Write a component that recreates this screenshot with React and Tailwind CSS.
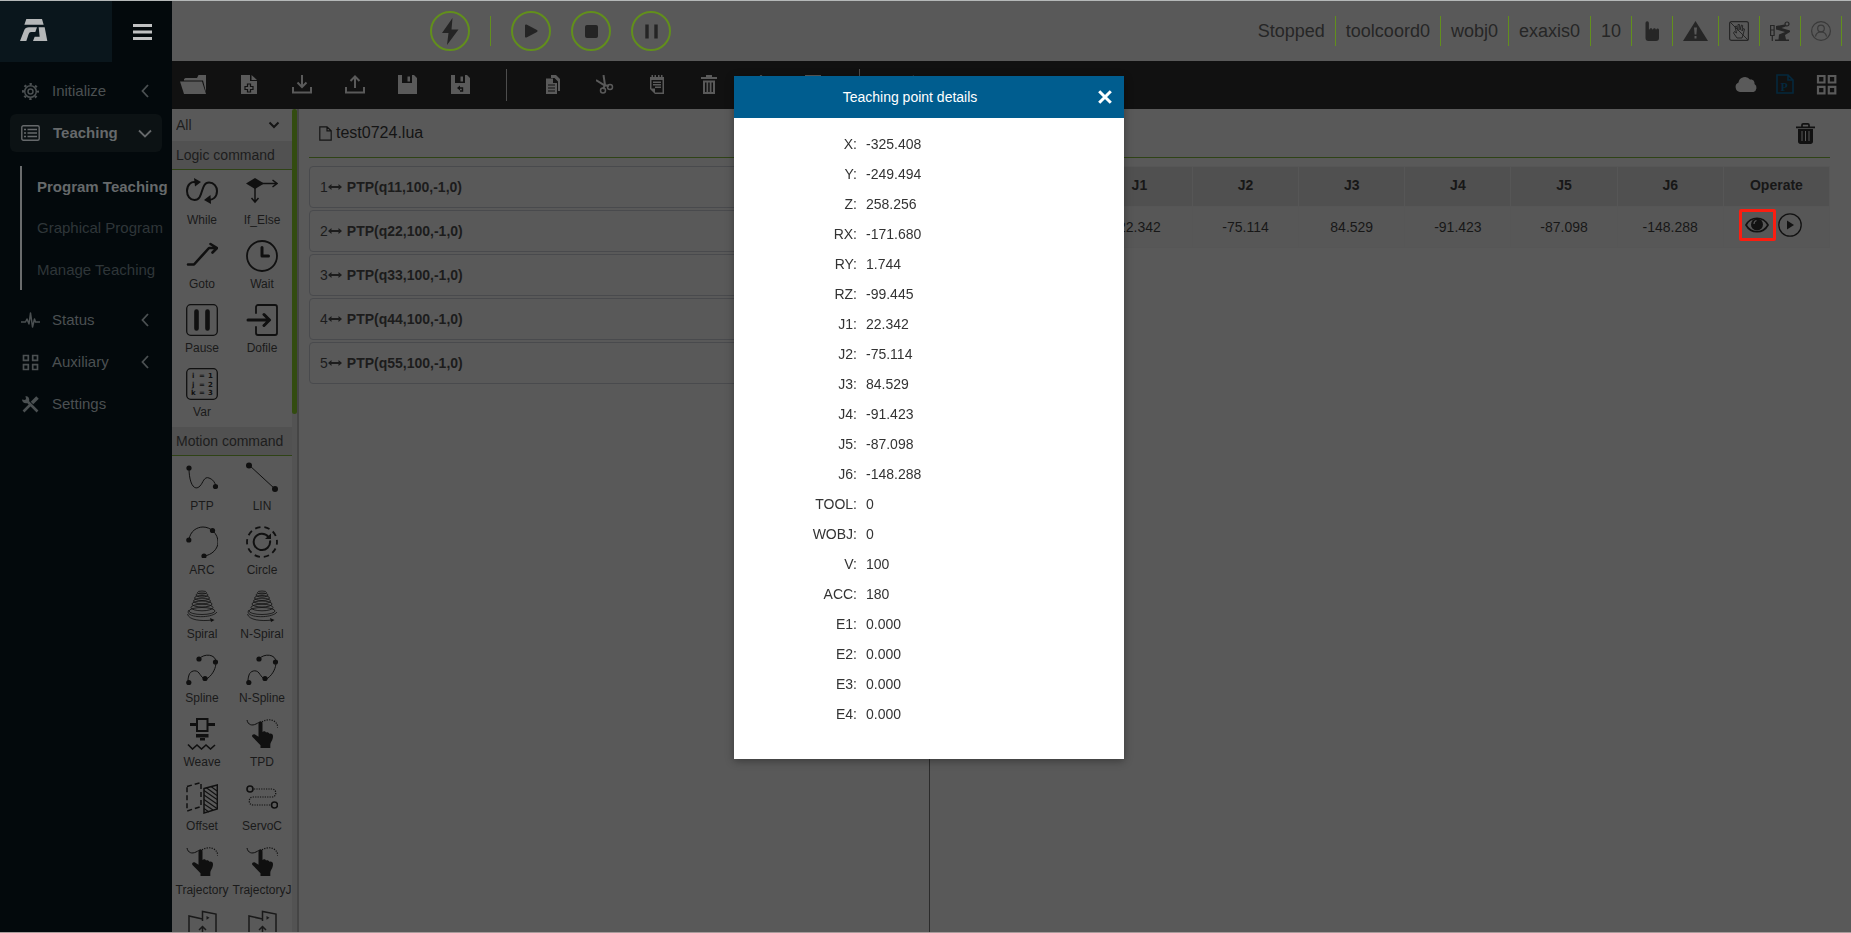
import React from "react";

const S = ({ w = 32, h, box, className = "", children }) => (
  <svg width={w} height={h || w} viewBox={box || `0 0 ${w} ${h || w}`} className={`shrink-0 ${className}`} fill="none" stroke="currentColor" strokeWidth="2" aria-hidden="true">
    {children}
  </svg>
);

const fill = { fill: "currentColor", stroke: "none" };
const round = { strokeLinecap: "round", strokeLinejoin: "round" };

/* ---------- command palette drawings (32 x 32) ---------- */
const HandTrack = () => (
  <S>
    <path d="M1 2c1 5 5 6 9 4 2-1 3-2 5-2" strokeWidth="1" />
    <path d="M16 4c6-4 15-3 16 6" strokeWidth="1.2" strokeDasharray="1.2 1.3" />
    <path {...fill} d="M12.500 5.500a2 2 0 0 1 4 0V14c1-1.200 3-1 3.500.6 1.300-.8 2.800-.2 3.200 1.100 1.500-.6 3.800.1 3.800 2.300 0 4.500-2.500 5.500-2.700 9V30H14.500v-2.700C12 24.500 9.500 22 6.500 19c-1.300-1.500.5-3.500 2.500-2.600l3.500 2.400z" />
  </S>
);
const Spiral = () => (
  <S>
    <g strokeWidth="0.8">
      <ellipse cx="16" cy="2.500" rx="4.500" ry="1.500" />
      <ellipse cx="16" cy="5" rx="6" ry="2" />
      <ellipse cx="16" cy="8" rx="7.500" ry="2.500" />
      <ellipse cx="16" cy="11" rx="8.500" ry="2.800" />
      <ellipse cx="16" cy="14" rx="10" ry="3" />
      <ellipse cx="16" cy="17.500" rx="11" ry="3.300" />
      <ellipse cx="16" cy="21" rx="13" ry="3.500" />
      <path d="M3 20c-6 8 23 9 28 2" />
      <path d="M1.500 24c1 6 14 7.500 24.500 6" />
    </g>
    <path {...fill} d="m24 28 4.500 2-3.500 2z" />
  </S>
);
const Spline = () => (
  <S>
    <path d="M13 5c5-6 17-5 17 3 0 6-3 12-8 16-4 3-6-1-9-5-3-4-9-2-10 2-1 3-1 5-1 7" strokeWidth="1" />
    <circle {...fill} cx="13" cy="5" r="2.600" />
    <circle {...fill} cx="29.500" cy="8" r="2.600" />
    <circle {...fill} cx="19" cy="24.500" r="2.600" />
    <circle {...fill} cx="2.800" cy="28.500" r="2.600" />
  </S>
);
const Door = () => (
  <S>
    <g strokeWidth="1.500">
      <path d="M15.500 31H3V6l13.500 3M16.500 11V1.500L30 4v27" />
      <path d="M16.500 16v9M13 20l3.500-3.500L20 20" />
    </g>
    <path {...fill} d="m20.500 6 3 1.800-3 2z" />
  </S>
);

const logic = [
  ["While", <S key="i"><path strokeWidth="2" d="M11 6.500C5 4.500 1 9 1 15c0 5 3 9 7.500 9C18 24 14 6.500 23 6.500c5 0 8 4 8 8.500 0 6-4 9.500-9 8.500" /><path {...fill} d="m8 2 7 4-6 4.500zM24.500 19l-6.500 5 7 4z" /></S>],
  ["If_Else", <S key="i"><path {...fill} d="M0 7.500 9 2l9 5.500L9 13z" /><path strokeWidth="1.500" d="M15 7.500h16M26.500 4l4.500 3.500-4.500 3.500M9 12v14M5.500 22 9 26l3.500-4" /></S>],
  ["Goto", <S key="i"><path {...round} strokeWidth="2.600" d="M2 24.500h6L23 8h7M24.500 4 31 8l-4.500 4.500" /></S>],
  ["Wait", <S key="i"><circle cx="16" cy="16" r="15" strokeWidth="1.800" /><path {...round} strokeWidth="3" d="M16 7.500V16h6.500" /></S>],
  ["Pause", <S key="i"><rect x="0.700" y="0.700" width="30.600" height="30.600" rx="4" strokeWidth="1.300" /><path strokeLinecap="round" strokeWidth="4.600" d="M10.500 7.500v17M21.500 7.500v17" /></S>],
  ["Dofile", <S key="i"><path {...round} strokeWidth="1.800" d="M10 9V3c0-1 1-2 2-2h17c1 0 2 1 2 2v26c0 1-1 2-2 2H12c-1 0-2-1-2-2v-6" /><path {...round} strokeWidth="3" d="M2 16h21M18 10.500l5.500 5.500-5.500 5.500" /></S>],
  ["Var", <S key="i"><rect x="0.700" y="0.700" width="30.600" height="30.600" rx="4" strokeWidth="1.300" /><g {...fill} fontSize="7" fontWeight="bold" fontFamily="'DejaVu Sans', sans-serif"><text x="6" y="10">i</text><text x="13" y="10">=</text><text x="22" y="10">1</text><text x="6" y="18.500">j</text><text x="13" y="18.500">=</text><text x="22" y="18.500">2</text><text x="5" y="27">k</text><text x="13" y="27">=</text><text x="22" y="27">3</text></g></S>],
];

const motion = [
  ["PTP", <S key="i"><path strokeWidth="1" d="M3 6c0 15 5 24 11 18 3-3 4-10 9-8 4 1 6 5 7 8" /><circle {...fill} cx="3" cy="6" r="2.600" /><circle {...fill} cx="29.500" cy="24.500" r="2.600" /></S>],
  ["LIN", <S key="i"><path strokeWidth="1" d="m3 3 26 24" /><circle {...fill} cx="3" cy="3.500" r="3" /><circle {...fill} cx="29" cy="27" r="3" /></S>],
  ["ARC", <S key="i"><path strokeWidth="1" d="M3 14C4 5 11 1 17 1c8 0 15 7 15 15 0 7-6 13-14 14" /><circle {...fill} cx="2.800" cy="14" r="2.600" /><circle {...fill} cx="26.500" cy="4.500" r="2.600" /><circle {...fill} cx="18" cy="30" r="2.600" /></S>],
  ["Circle", <S key="i"><circle cx="16" cy="16" r="15" strokeWidth="1.800" strokeDasharray="5.400 4.020" strokeDashoffset="2.700" /><path d="M24 14.500A8.200 8.200 0 1 1 22.500 11" strokeWidth="2" /><path {...fill} d="M25 7.500V13h-6z" /></S>],
  ["Spiral", <Spiral key="i" />],
  ["N-Spiral", <Spiral key="i" />],
  ["Spline", <Spline key="i" />],
  ["N-Spline", <Spline key="i" />],
  ["Weave", <S key="i"><rect x="11" y="1" width="10.500" height="12" strokeWidth="2" /><path d="M4 6.500h7M21.500 6.500H29" strokeWidth="3" /><path {...fill} d="M10 16h12.500v3.500H10zM14 20h5v2.500h-5z" /><path strokeWidth="1.600" d="m2 26.500 4.500 4.500 4.500-4 4.500 4 4.500-4 4.500 4 4.500-4" /></S>],
  ["TPD", <HandTrack key="i" />],
  ["Offset", <S key="i"><path strokeWidth="1.500" strokeDasharray="5 3" d="M1 4.500 15 .5v24L1 29z" /><path strokeWidth="1.500" d="M18 6.500 31.300 3v24L18 31z" /><path strokeWidth="1.100" d="m20 5.500 11 8M18 8.500l13 9M18 13l13 9M18 17.500l13 9M18 22l9 6M18 26.500l5 3.500M25 4.500l6 4.500" /></S>],
  ["ServoC", <S key="i"><circle cx="4" cy="7" r="3" strokeWidth="1.600" /><circle cx="28.500" cy="23" r="3" strokeWidth="1.600" /><path strokeWidth="1.200" strokeDasharray="1.200 1.200" d="M8 7h18c5 0 5 8 0 8H7c-5 0-5 8 0 8h18" /></S>],
  ["Trajectory", <HandTrack key="i" />],
  ["TrajectoryJ", <HandTrack key="i" />],
];

const cellButton = "flex h-16 min-w-0 flex-col items-center pt-1.5 text-xs leading-6 whitespace-nowrap text-[#1a1a1a]";

function Palette({ title, items, children }) {
  return (
    <section>
      <h2 className="box-content h-7 border-b border-[#2f4316] bg-[#515151] pl-1 text-sm leading-7 text-[#1d1d1d]">{title}</h2>
      <div className="grid grid-cols-2 pb-px">
        {items.map(([label, icon]) => (
          <button key={label} type="button" className={cellButton}>
            <span className="text-[#101010]">{icon}</span>
            {label}
          </button>
        ))}
        {children}
      </div>
    </section>
  );
}

/* ---------- toolbar drawings ---------- */
const floppy = <path {...fill} fillRule="evenodd" d="M0 0h16l3 3v16H0zM4 0v8h10V0zM9.500 1.500v5h2.500v-5z" />;
const Floppy = () => <S w={19}>{floppy}</S>;
const FloppyAs = () => (
  <S w={19}>
    {floppy}
    <path stroke="#111" strokeWidth="1.400" d="M8 13h3.500v3H9" />
    <path fill="#111" stroke="none" d="M9 10.500v5L6 13z" />
  </S>
);
const fileTools = [
  ["New", <S key="i" w={16} h={19}><path {...fill} d="M0 0h9v6h7v13H0zM10.500 0 16 5h-5.500z" /><path stroke="#111" strokeWidth="1.200" d="M6.500 9h3v2.500H12v3H9.500V17h-3v-2.500H4v-3h2.500z" /></S>],
  ["Import", <S key="i" w={20} h={19}><path d="M1 12v5.500h18V12" strokeWidth="2" /><path d="M10 0v12M5.500 7.500 10 12l4.500-4.500" strokeWidth="2" /></S>],
  ["Export", <S key="i" w={20} h={19}><path d="M1 12v5.500h18V12" strokeWidth="2" /><path d="M10 13V1.500M5.500 6 10 1.500 14.500 6" strokeWidth="2" /></S>],
  ["Save", <Floppy key="i" />],
  ["Save as", <FloppyAs key="i" />],
];
const editTools = [
  ["Copy", <S key="i" w={14} h={19}><path {...fill} d="M5 0h5l4 4v12h-2V6.500L8.500 3H5z" /><path {...fill} fillRule="evenodd" d="M0 3.500h7V8h4v11H0zm2 6v1h7v-1zm0 3v1h7v-1zm0 3v1h7v-1z" /></S>],
  ["Cut", <S key="i" w={18} h={19}><path strokeWidth="2" d="M7.500 0 9 10l-2 4M0 5l8 5 5 1" /><circle cx="7" cy="15.500" r="2.500" strokeWidth="1.500" /><circle cx="14" cy="12" r="2.500" strokeWidth="1.500" /></S>],
  ["Paste", <S key="i" w={14} h={19}><path {...fill} fillRule="evenodd" d="M0 2h1.500V0H3v2h1.500V0H6v2h2V0h1.500v2H11V0h1.500v2H14v17H5l-5-5zM1.500 5v8.500H5V17.500h7.500V5zM3 6.500h8V8H3zM3 9h8v1.500H3zM5 11.500h6V13H5z" /></S>],
  ["Delete", <S key="i" w={16} h={19}><path {...fill} fillRule="evenodd" d="M5 0h6v2h5v2H0V2h5zM2 5.500h12V19H2zm2 2V17h1.500V7.500zm3.200 0V17h1.500V7.500zm3.300 0V17H12V7.500z" /></S>],
  ["Move up", <S key="i" w={16} h={19}><path d="M8 19V1M2 7l6-6 6 6" /></S>],
  ["Edit", <S key="i" w={16} h={19}><path d="M0 1h16v17H0z" /></S>],
];

const divider = "h-8 w-px shrink-0 bg-[#4d4d4d]";

function Toolbar() {
  return (
    <div className="flex h-12 shrink-0 items-center bg-[#111111] text-[#5a5a5a]">
      <button type="button" aria-label="Open" className="flex w-[50px] shrink-0 pb-0.5 pl-2">
        <S w={27} h={19}><path {...fill} d="M4 4 5.500 3H17l1.500-3H26v17l-3-11.500H4z" /><path {...fill} d="M0 6.500h22L26 19H4z" /></S>
      </button>
      {fileTools.map(([n, i]) => <button key={n} type="button" aria-label={n} className="flex w-[53px] shrink-0 justify-center pb-0.5">{i}</button>)}
      <span className={`${divider} ml-[19px] mr-5`} />
      {editTools.map(([n, i]) => <button key={n} type="button" aria-label={n} className="flex w-[52px] shrink-0 justify-center pb-0.5">{i}</button>)}
      <span className={`${divider} ml-5 mr-7`} />
      <button type="button" aria-label="Undo" className="flex w-[52px] shrink-0 justify-center pb-0.5"><S w={16} h={19}><path d="M8 1 3 6l5 5M3 6h11v10H3" /></S></button>
      <div className="ml-auto flex items-center gap-[18px] pr-[14px] pb-0.5">
        <button type="button" aria-label="Cloud"><S w={23} h={16}><path {...fill} d="M5 16a5 5 0 0 1-1.500-9.500A6.500 6.500 0 0 1 15 3.500c3-.7 5 2 4.500 4.500A4.500 4.500 0 0 1 18.500 16z" /></S></button>
        <button type="button" aria-label="Program" className="text-[#05283d]"><S w={18} h={20}><path strokeWidth="1.600" d="M1 1h11l5 5v13H1zM12 1v5h5" /><text {...fill} x="4.500" y="16.500" fontSize="12" fontWeight="bold" fontFamily="'Liberation Serif', serif">P</text></S></button>
        <button type="button" aria-label="Layout" className="pl-1"><S w={21}><path strokeWidth="2.200" d="M2 2h6.500v6.500H2zM12.800 2h6.500v6.500h-6.500zM2 12.800h6.500v6.500H2zM12.800 12.800h6.500v6.500h-6.500z" /></S></button>
      </div>
    </div>
  );
}

/* ---------- header ---------- */
const ring = "flex size-10 items-center justify-center rounded-full border-2 border-[#628f1c] text-[#242424]";
const slot = "flex h-[30px] items-center border-r border-[#628f1c] px-2.5";

function Header() {
  return (
    <header className="flex h-[60px] shrink-0 items-center bg-[#595959] pr-[9px] pl-[258px] text-lg text-[#262626]">
      <button type="button" aria-label="Enable" className={ring}><S w={17} h={27}><path {...fill} d="M10.500 0 0 15h6.500L5 27l11.500-15.500H9.500z" /></S></button>
      <span className="mx-5 h-[30px] w-px bg-[#628f1c]" />
      <div className="flex gap-5">
        <button type="button" aria-label="Start" className={ring}><S w={14}><path fill="currentColor" {...round} d="M2 1.500 12.500 7 2 12.500z" /></S></button>
        <button type="button" aria-label="Stop" className={ring}><span className="size-[13px] rounded-xs bg-[#242424]" /></button>
        <button type="button" aria-label="Pause" className={ring}><S w={13} h={15}><path strokeWidth="3.400" d="M2 .5v14M11 .5v14" /></S></button>
      </div>
      <div className="ml-auto flex">
        {["Stopped", "toolcoord0", "wobj0", "exaxis0", "10"].map((t) => <span key={t} className={slot}>{t}</span>)}
        <span className={slot}><S w={20}><path {...fill} d="M3.500 2a1.700 1.700 0 0 1 3.400 0v6.500h.6c.3-1.600 2.700-1.600 2.900 0h.6c.3-1.600 2.600-1.600 2.800 0h.5c.3-1.500 2.700-1.300 2.700.5V17c0 2-1 3-3 3H6.500c-2 0-3-1-3-3z" /></S></span>
        <span className={slot}><S w={25} h={20}><path {...fill} fillRule="evenodd" d="M12.500 0 25 20H0zM11 6.500l.6 7h1.800l.6-7zM11.500 15v2.500h2V15z" /></S></span>
        <span className={slot}><S w={20}><rect x=".6" y=".6" width="18.800" height="18.800" rx="2" strokeWidth="1.200" /><path strokeWidth="1" d="m1 1 18 18M8 17l-3.500-5 1-1.500L7.500 12 6 5.500 7.500 5 9 9.500 9 3.500h1.500L11 9l1.500-5 1.200.5L13 10l1.500-2.500 1 .5-1.500 6-1 3z" /></S></span>
        <span className={slot}><S w={20}><path {...fill} d="M6 5 14.500 3.500l1 2L11.500 7 20 9.500v1.500L15 14l1 4.500h3V20H5v-1.500h3.500l.5-5 6-2.500L6 8.500z" /><circle cx="17" cy="3" r="2" strokeWidth="1.200" /><path strokeWidth="1.200" d="M.6 4.500h3.500v10H.6zM.6 9h3.500M2.300 14.500V20" /></S></span>
        <span className={`${slot} text-[#393939]`}><S w={20}><g strokeWidth="1.200"><circle cx="10" cy="10" r="9.400" /><circle cx="10" cy="7.500" r="3.300" /><path d="M4.500 15.500c.5-3 3-4.500 5.500-4.500s5 1.500 5.500 4.500" /></g></S></span>
      </div>
    </header>
  );
}

/* ---------- sidebar ---------- */
const ChevL = () => <S w={8} h={14} className="ml-auto mr-[3px]"><path d="M7 1 1.500 7 7 13" strokeWidth="1.800" /></S>;
const navRow = "flex h-[38px] w-full items-center rounded-md px-[10px] text-[15px] text-[#4b5052]";
const navIcon = "mr-3 flex w-5 justify-center";

function Sidebar() {
  return (
    <nav className="flex w-43 shrink-0 flex-col bg-[#03090c]">
      <div className="flex h-[61px] items-stretch">
        <div className="flex w-28 items-center bg-[#0a161c] pb-1 pl-[19px] text-[#b5b7b8]">
          <S w={29} h={24} box="57 54 87 72">
            <path {...fill} d="M79 57h47l5 17H73zM60 123l12-31q4-10 15-10h24l-5 14H93q-5 0-7 6l-7 21zM116 82h18l8 41H99l5-13h15z" />
          </S>
        </div>
        <button type="button" aria-label="Toggle menu" className="flex flex-1 items-center justify-center text-[#c0c1c2]"><S w={19} h={16}><path strokeWidth="3" d="M0 1.500h19M0 8h19M0 14.500h19" /></S></button>
      </div>
      <div className="px-[10px] pt-[10px]">
        <button type="button" className={navRow}>
          <span className={navIcon}><S w={17}><circle cx="8.500" cy="8.500" r="5.800" strokeWidth="1.500" /><circle cx="8.500" cy="8.500" r="2.500" strokeWidth="1.500" /><circle cx="8.500" cy="8.500" r="7.500" strokeWidth="2" strokeDasharray="2.400 3.490" strokeDashoffset="1.200" /></S></span>
          Initialize<ChevL />
        </button>
        <button type="button" className={`${navRow} mt-1 bg-[#0c1214] font-bold text-[#66696b]`}>
          <span className={navIcon}><S w={19} h={16}><rect x=".8" y=".8" width="17.400" height="14.400" rx="1.500" strokeWidth="1.400" /><path strokeWidth="1.300" d="M3 4.500h2M3 8h2M3 11.500h2M6.500 4.500H16M6.500 8H16M6.500 11.500H16" /></S></span>
          <span className="pl-px">Teaching</span>
          <S w={14} h={9} className="ml-auto"><path d="m1 1.500 6 6 6-6" strokeWidth="1.800" /></S>
        </button>
      </div>
      <ul className="mt-3.5 ml-5 border-l-2 border-[#6a6c6d] text-[15px] whitespace-nowrap text-[#2f3639]">
        <li><a href="#program" className="block pl-[15px] leading-[41px] font-bold text-[#66696b]">Program Teaching</a></li>
        <li><a href="#graphical" className="block pl-[15px] leading-[42px]">Graphical Program</a></li>
        <li><a href="#manage" className="block pl-[15px] leading-[41px]">Manage Teaching</a></li>
      </ul>
      <div className="flex flex-col gap-1 px-[10px] pt-[11px]">
        <button type="button" className={navRow}>
          <span className={navIcon}><S w={19} h={16}><path strokeWidth="1.500" strokeLinejoin="round" d="M0 10h4.500l1.500-3 2 5L9.500 1l2 14L13.500 7l1 3H19" /></S></span>
          Status<ChevL />
        </button>
        <button type="button" className={navRow}>
          <span className={navIcon}><S w={17}><path strokeWidth="1.700" d="M1.500 1.500h4.800v4.800H1.500zM10.700 1.500h4.800v4.800h-4.800zM1.500 10.700h4.800v4.800H1.500zM10.700 10.700h4.800v4.800h-4.800z" /></S></span>
          Auxiliary<ChevL />
        </button>
        <button type="button" className={navRow}>
          <span className={navIcon}><S w={17}><path strokeWidth="2.600" d="m4.500 4.500 11 11M1.500 15.500 9 8" /><path strokeWidth="3.600" d="m10 7 5.500-5.500" /><path {...fill} d="M0 3.500 3 4l1-1L3.500 0C6.500 0 8 3 7 5.500L5.500 7C3 8 0 6.500 0 3.500z" /></S></span>
          Settings
        </button>
      </div>
    </nav>
  );
}

/* ---------- data ---------- */
const program = ["q11", "q22", "q33", "q44", "q55"];
const joints = [["J1", "22.342"], ["J2", "-75.114"], ["J3", "84.529"], ["J4", "-91.423"], ["J5", "-87.098"], ["J6", "-148.288"]];
const details = [
  ["X", "-325.408"], ["Y", "-249.494"], ["Z", "258.256"], ["RX", "-171.680"], ["RY", "1.744"], ["RZ", "-99.445"],
  ...joints,
  ["TOOL", "0"], ["WOBJ", "0"], ["V", "100"], ["ACC", "180"], ["E1", "0.000"], ["E2", "0.000"], ["E3", "0.000"], ["E4", "0.000"],
];

function ProgramPanel() {
  return (
    <section className="w-[37.5%] shrink-0 pl-[10px]">
      <h1 className="box-content flex h-12 items-center gap-1 border-b border-[#2f4316] pl-[10px] text-base text-[#141414]">
        <S w={13} h={15}><path strokeWidth="1.200" d="M.8.8H8l4.200 4v9.400H.8zM8 .8v4h4.200" /></S>
        test0724.lua
      </h1>
      <ol className="flex flex-col gap-0.5 pt-2">
        {program.map((p, i) => (
          <li key={p} className="flex h-[42px] items-center rounded-sm border border-[#494a4d] pl-[10px] text-sm text-[#1c1c1c]">
            {i + 1}
            <S w={14} h={8} className="mr-[5px]"><path d="M2 4h10" strokeWidth="2" /><path {...fill} d="M0 4 3.500 1v6zM14 4l-3.500-3v6z" /></S>
            <b>PTP({p},100,-1,0)</b>
          </li>
        ))}
      </ol>
    </section>
  );
}

function PointsPanel() {
  const td = "border border-[#565656] p-0 text-center";
  const th = "border border-[#565656] px-0 pt-0 pb-[3px] text-center";
  return (
    <section className="min-w-0 flex-1 border-l border-[#2b2b2b] pr-[21px] pl-[10px]">
      <div className="box-content flex h-12 items-center justify-end border-b border-[#2f4316]">
        <button type="button" aria-label="Delete points" className="pr-[15px] text-[#111]">
          <S w={19} h={21}><path {...fill} fillRule="evenodd" d="M0 3.500h19v1.800H0zM2 6h15v12.500c0 1.500-1 2.500-2.500 2.500h-10C3 21 2 20 2 18.500zm3.500 2v10h1V8zM9 8v10h1V8zm3.500 0v10h1V8z" /><path strokeWidth="1.700" d="M6 4V2c0-.7.5-1.100 1.200-1.100h4.600C12.500.9 13 1.300 13 2v2" /></S>
        </button>
      </div>
      <table className="mt-2 w-full table-fixed border-collapse text-sm text-[#171717]">
        <thead>
          <tr className="h-10 bg-[#505050]">
            <th className={`${th} w-10`}><input type="checkbox" aria-label="Select all" className="align-middle" /></th>
            <th className={th}>Name</th>
            {joints.map(([j]) => <th key={j} className={th}>{j}</th>)}
            <th className={th}>Operate</th>
          </tr>
        </thead>
        <tbody>
          <tr className="h-[41px] bg-[#575757]">
            <td className={td}><input type="checkbox" aria-label="Select q11" className="align-middle" /></td>
            <td className={td}>q11</td>
            {joints.map(([j, v]) => <td key={j} className={td}>{v}</td>)}
            <td className={td}>
              <div className="flex items-center justify-center pr-3 pb-1 text-[#121212]">
                <button type="button" aria-label="View details" className="flex h-8 w-[37px] items-center justify-center rounded-xs border-3 border-[#fb1d10]">
                  <S w={24} h={16}><path strokeWidth="1.700" d="M1 8c5-9 17-9 22 0-5 9-17 9-22 0z" /><circle {...fill} cx="12" cy="7.500" r="6" /><path stroke="#575757" strokeWidth="1.200" d="M9 7c0-2 1-3 2.500-3.500" /></S>
                </button>
                <button type="button" aria-label="Run to point" className="pl-0.5"><S w={24}><circle cx="12" cy="12" r="11.200" strokeWidth="1.300" /><path {...fill} d="m9 7.500 7 4.500-7 4.500z" /></S></button>
              </div>
            </td>
          </tr>
        </tbody>
      </table>
    </section>
  );
}

function DetailsDialog() {
  return (
    <div className="fixed inset-0 flex items-start justify-center pt-19 pl-[7px]">
      <div role="dialog" aria-labelledby="details-title" className="w-[390px] bg-white text-sm text-[#333] shadow-[0_2px_8px_rgba(0,0,0,0.35)]">
        <div className="flex h-[42px] items-center bg-[#005d8f] text-white">
          <h2 id="details-title" className="flex-1 text-center">Teaching point details</h2>
          <button type="button" aria-label="Close" className="flex w-[38px] justify-center"><S w={14}><path strokeWidth="3" d="m1.200 1.200 11.600 11.600M12.800 1.200 1.200 12.800" /></S></button>
        </div>
        <dl className="pt-[11px] pb-[30px]">
          {details.map(([k, v]) => (
            <div key={k} className="flex gap-[9px] leading-[30px]">
              <dt className="w-[123px] text-right">{k}:</dt>
              <dd>{v}</dd>
            </div>
          ))}
        </dl>
      </div>
    </div>
  );
}

export default function App() {
  return (
    <div className="flex h-screen overflow-hidden border-t border-b border-t-[#b5b8b8] border-b-[#a99b9b] bg-[#595959] font-['Liberation_Sans',Arial,sans-serif]">
      <Sidebar />
      <div className="flex min-w-0 flex-1 flex-col">
        <Header />
        <Toolbar />
        <main className="flex min-h-0 flex-1">
          <aside className="flex shrink-0 border-r-2 border-[#454545]">
            <div className="w-30 overflow-hidden">
              <div className="flex h-8 items-center">
                <select aria-label="Command filter" className="h-full w-full appearance-none bg-[#595959] pl-1 text-sm text-[#1d1d1d]">
                  <option>All</option>
                </select>
                <S w={12} h={8} className="pointer-events-none -ml-6 text-[#151515]"><path d="m1.500 1.500 4.500 4.500 4.500-4.500" strokeWidth="2" /></S>
              </div>
              <Palette title="Logic command" items={logic} />
              <Palette title="Motion command" items={motion}>
                <button type="button" aria-label="Door in" className={cellButton}><Door /></button>
                <button type="button" aria-label="Door out" className={cellButton}><Door /></button>
              </Palette>
            </div>
            <div className="w-[5px] bg-[#535353]"><div className="h-[37%] rounded-full bg-[#334c10]" /></div>
          </aside>
          <ProgramPanel />
          <PointsPanel />
        </main>
      </div>
      <DetailsDialog />
    </div>
  );
}
